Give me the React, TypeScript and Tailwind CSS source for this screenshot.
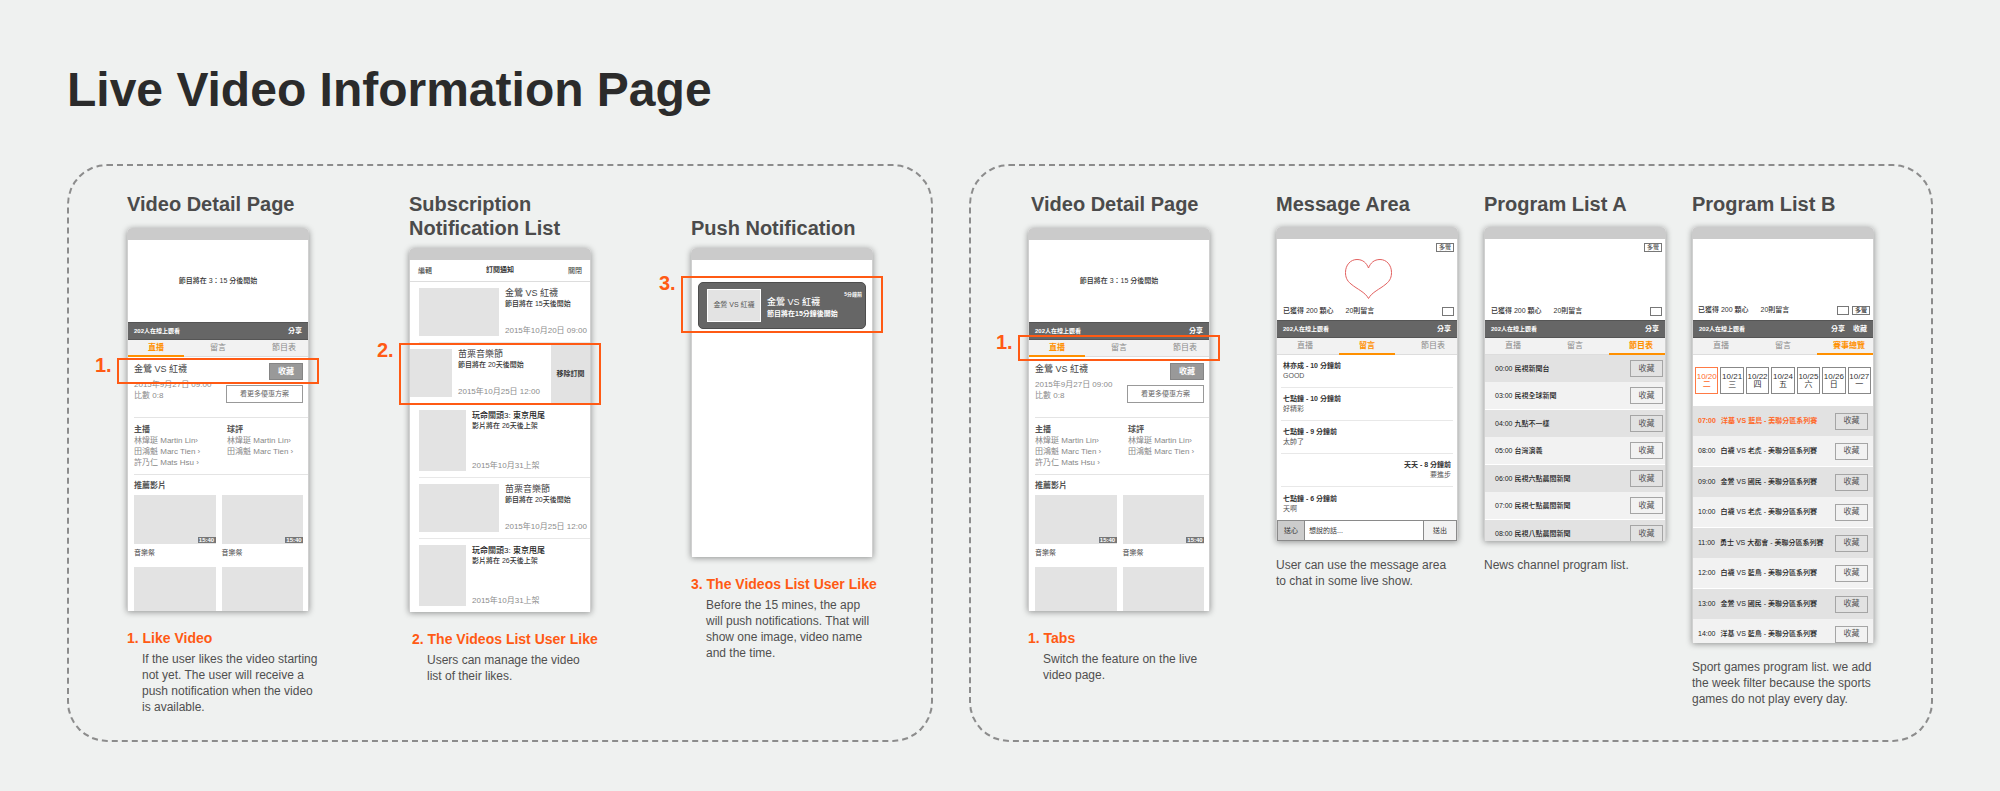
import React from "react";

/* ---------- shared pieces ---------- */

function Phone({ height, children, overlay }: { height: string; children: React.ReactNode; overlay?: React.ReactNode }) {
  return (
    <div className="relative">
      <div className={`${height} flex flex-col overflow-hidden rounded-t-[5px] bg-white shadow-[0_1px_6px_rgba(0,0,0,0.4)]`}>
        <div className="h-3 shrink-0 bg-[#cbcbcb]" />
        <div className="flex min-h-0 flex-1 flex-col overflow-hidden border-x border-[#d0d0d0] text-[#333]">{children}</div>
      </div>
      {overlay}
    </div>
  );
}

function Marker({ label, place }: { label: string; place: string }) {
  return (
    <div className={`absolute -inset-x-[10px] border-2 border-[#ff5a14] ${place}`}>
      <span className="absolute -top-[7px] -left-6 text-xl leading-6 font-bold text-[#ff5a14]">{label}</span>
    </div>
  );
}

function Column({ title, pad = "pt-0", gap = "mb-3", indent = "pl-0", children }: {
  title: string[]; pad?: string; gap?: string; indent?: string; children: React.ReactNode;
}) {
  return (
    <section className={`w-[182px] shrink-0 ${pad}`}>
      <h2 className={`text-xl leading-6 font-bold whitespace-nowrap text-[#4b4b4b] ${gap} ${indent}`}>
        {title.map((t) => <span key={t} className="block">{t}</span>)}
      </h2>
      {children}
    </section>
  );
}

function Lines({ lines, className = "" }: { lines: string[]; className?: string }) {
  return (
    <p className={`text-xs leading-4 whitespace-nowrap text-[#4f4f4f] ${className}`}>
      {lines.map((l) => <span key={l} className="block">{l}</span>)}
    </p>
  );
}

function Caption({ title, lines, indent = "pl-0" }: { title: string; lines: string[]; indent?: string }) {
  return (
    <div className={`mt-[17px] ${indent}`}>
      <h3 className="mb-[3px] text-sm leading-5 font-bold whitespace-nowrap text-[#ff5a14]">{title}</h3>
      <Lines lines={lines} className="pl-[15px]" />
    </div>
  );
}

function WatchBar({ actions }: { actions: string[] }) {
  return (
    <div className="flex h-[18px] shrink-0 items-center border-y border-[#555] bg-[#666] px-[6px] font-bold text-white">
      <span className="text-[6px]">202人在線上觀看</span>
      <span className="ml-auto flex gap-2">
        {actions.map((a) => <button key={a} type="button" className="text-[7px] leading-3">{a}</button>)}
      </span>
    </div>
  );
}

function Tabs({ active, third = "節目表" }: { active: number; third?: string }) {
  return (
    <div className="grid h-[17px] shrink-0 grid-cols-3 gap-x-[6px] bg-[#f2f2f2] shadow-[inset_0_-1px_0_#ddd]">
      {["直播", "留言", third].map((t, i) => (
        <button
          key={t}
          type="button"
          className={`border-b-2 text-[8px] leading-3 whitespace-nowrap ${i === 2 ? "pl-2" : ""} ${
            i === active ? "border-[#ff9000] font-bold text-[#ff9000]" : "border-transparent text-[#8a8a8a]"
          }`}
        >
          {t}
        </button>
      ))}
    </div>
  );
}

/* ---------- video detail ---------- */

function People({ role, names }: { role: string; names: string[] }) {
  return (
    <div className="text-[8px] leading-[11px] text-[#888]">
      <h4 className="font-bold text-[#555]">{role}</h4>
      {names.map((n) => <a key={n} href="#" className="block whitespace-nowrap">{n}</a>)}
    </div>
  );
}

function Thumb() {
  return (
    <figure>
      <div className="flex h-[49px] items-end justify-end bg-[#e3e3e3]">
        <span className="mb-px w-[18px] bg-[#777] text-center text-[6px] leading-[6px] font-bold text-white">15:40</span>
      </div>
      <figcaption className="pt-1 text-[7px] leading-[10px] text-[#444]">音樂祭</figcaption>
    </figure>
  );
}

function VideoDetail() {
  return (
    <>
      <div className="flex h-[82px] shrink-0 items-center justify-center text-[7px] font-medium">節目將在 3：15 分後開始</div>
      <WatchBar actions={["分享"]} />
      <Tabs active={0} />
      <div className="flex h-[60px] shrink-0 justify-between pr-[5px] pl-[6px]">
        <div className="pt-[7px] whitespace-nowrap">
          <h4 className="mb-1 text-[9px] leading-[11px] text-[#444]">金鶯 VS 紅襪</h4>
          <p className="text-[8px] leading-[11px] text-[#8c8c8c]">2015年9月27日 09:00</p>
          <p className="text-[8px] leading-[11px] text-[#8c8c8c]">比數 0:8</p>
        </div>
        <div className="flex flex-col items-end gap-[5px] pt-[6px]">
          <button type="button" className="h-[17px] w-[34px] border border-[#858585] bg-[#999] text-[8px] leading-3 font-bold text-white">收藏</button>
          <button type="button" className="h-[18px] w-[77px] border border-[#999] text-[7px] leading-3 text-[#666]">看更多優惠方案</button>
        </div>
      </div>
      <div className="ml-[6px] grid h-[57px] shrink-0 grid-cols-[93px_1fr] border-t border-[#e4e4e4] pt-[6px]">
        <People role="主播" names={["林煒珽 Martin Lin›", "田鴻魁 Marc Tien ›", "許乃仁 Mats Hsu ›"]} />
        <People role="球評" names={["林煒珽 Martin Lin›", "田鴻魁 Marc Tien ›"]} />
      </div>
      <div className="ml-[6px] border-t border-[#e4e4e4] pt-[5px] pr-[5px]">
        <h4 className="mb-1 text-[8px] leading-[11px] font-bold text-[#555]">推薦影片</h4>
        <div className="grid grid-cols-2 gap-x-[6px] gap-y-[9px]">
          <Thumb />
          <Thumb />
          <div className="h-[49px] bg-[#e3e3e3]" />
          <div className="h-[49px] bg-[#e3e3e3]" />
        </div>
      </div>
    </>
  );
}

/* ---------- subscription list ---------- */

function SubRow({ kind, title, sub, date, removable }: {
  kind: "wide" | "tall"; title: string; sub: string; date: string; removable?: boolean;
}) {
  const tall = kind === "tall";
  return (
    <li className={`flex shrink-0 items-stretch ${tall ? "h-[74px]" : "h-[61px]"}`}>
      <div className={`flex min-w-0 flex-1 border-b border-[#e8e8e8] py-[6px] ${removable ? "" : "ml-[9px]"}`}>
        <div className={`shrink-0 bg-[#e3e3e3] ${tall ? "w-[47px]" : removable ? "w-[42px]" : "w-[80px]"}`} />
        <div className="ml-[6px] flex flex-col whitespace-nowrap">
          <h4 className={tall ? "text-[8px] leading-[11px] font-medium text-[#222]" : "text-[9px] leading-[11px] text-[#444]"}>{title}</h4>
          <p className="text-[7px] leading-[10px] font-medium">{sub}</p>
          <p className="mt-auto text-[8px] leading-[11px] text-[#8c8c8c]">{date}</p>
        </div>
      </div>
      {removable && (
        <button type="button" className="w-[39px] bg-[#e2e2e2] text-[7px] leading-3 font-bold">移除訂閱</button>
      )}
    </li>
  );
}

function Subscriptions() {
  return (
    <>
      <div className="grid h-[22px] shrink-0 grid-cols-3 items-center border-b border-[#ddd] px-2 text-[7px]">
        <button type="button" className="text-left leading-3">編輯</button>
        <span className="text-center font-bold">訂閱通知</span>
        <button type="button" className="text-right leading-3">關閉</button>
      </div>
      <ul className="flex flex-col">
        <SubRow kind="wide" title="金鶯 VS 紅襪" sub="節目將在 15天後開始" date="2015年10月20日 09:00" />
        <SubRow kind="wide" title="苗栗音樂節" sub="節目將在 20天後開始" date="2015年10月25日 12:00" removable />
        <SubRow kind="tall" title="玩命關頭3: 東京甩尾" sub="影片將在 26天後上架" date="2015年10月31上架" />
        <SubRow kind="wide" title="苗栗音樂節" sub="節目將在 20天後開始" date="2015年10月25日 12:00" />
        <SubRow kind="tall" title="玩命關頭3: 東京甩尾" sub="影片將在 26天後上架" date="2015年10月31上架" />
      </ul>
    </>
  );
}

/* ---------- push notification ---------- */

function Push() {
  return (
    <div className="mx-[6px] mt-[22px] flex h-[47px] items-center rounded-[5px] border border-[#4d4d4d] bg-[#666] pr-[3px] pl-2 text-white">
      <div className="flex h-[33px] w-[54px] shrink-0 items-center justify-center border border-white bg-[#e3e3e3] text-[7px] whitespace-nowrap text-[#555]">金鶯 VS 紅襪</div>
      <div className="ml-[6px] flex-1 pb-[2px] whitespace-nowrap">
        <p className="text-right text-[5px] leading-[6px] font-bold">5分鐘前</p>
        <p className="text-[9px] leading-[11px] font-medium">金鶯 VS 紅襪</p>
        <p className="text-[7px] leading-[11px] font-bold">節目將在15分鐘後開始</p>
      </div>
    </div>
  );
}

/* ---------- live channel screens ---------- */

function Stats({ children }: { children?: React.ReactNode }) {
  return (
    <div className="flex h-3 items-center gap-3 text-[7px] leading-3 font-medium whitespace-nowrap">
      <span>已獲得 200 顆心</span>
      <span>20則留言</span>
      <span className="ml-auto flex gap-[3px]">{children}</span>
    </div>
  );
}

const ScreenBox = () => <button type="button" aria-label="全螢幕" className="h-[9px] w-3 border border-[#777]" />;
const MultiBox = () => (
  <button type="button" className="h-[9px] w-[18px] border border-[#777] text-[6px] leading-[7px] whitespace-nowrap">多螢</button>
);

function Stage({ children }: { children?: React.ReactNode }) {
  return (
    <div className="flex h-[81px] shrink-0 flex-col justify-between pt-1 pr-[3px] pb-[3px] pl-[6px]">
      <div className="flex justify-end"><MultiBox /></div>
      {children}
      <Stats><ScreenBox /></Stats>
    </div>
  );
}

function Messages() {
  const rows = [
    { head: "林亦成 - 10 分鐘前", body: "GOOD" },
    { head: "七點鐘 - 10 分鐘前", body: "好精彩" },
    { head: "七點鐘 - 9 分鐘前", body: "太帥了" },
    { head: "天天 - 8 分鐘前", body: "要進步", mine: true },
    { head: "七點鐘 - 6 分鐘前", body: "天啊" },
  ];
  return (
    <>
      <Stage>
        <svg viewBox="0 0 47 40" className="h-10 w-[47px] shrink-0 self-center" fill="none" stroke="#e2605f" strokeWidth="1">
          <path d="M23.500 39.500C20 33 12.500 30.500 6 25C1.500 21.500 0.500 17.500 0.500 13.500C0.500 6 5.500 0.500 12 0.500C18 0.500 21.500 4 23.500 9C25.500 4 29 0.500 35 0.500C41.500 0.500 46.500 6 46.500 13.500C46.500 17.500 45.500 21.500 41 25C34.500 30.500 27 33 23.500 39.500Z" />
        </svg>
      </Stage>
      <WatchBar actions={["分享"]} />
      <Tabs active={1} />
      <ul className="flex flex-1 flex-col px-1 text-[7px] leading-[10px]">
        {rows.map((r) => (
          <li key={r.head} className={`flex h-[33px] shrink-0 flex-col justify-center border-b border-[#e8e8e8] px-[2px] last:border-0 ${r.mine ? "text-right" : ""}`}>
            <p className="font-bold">{r.head}</p>
            <p className="text-[#555]">{r.body}</p>
          </li>
        ))}
      </ul>
      <form className="flex h-[21px] shrink-0 border border-[#8a8a8a] text-[7px]" onSubmit={(e) => e.preventDefault()}>
        <button type="button" className="w-[27px] border-r border-[#8a8a8a] bg-[#ccc] leading-3">送心</button>
        <input aria-label="留言" placeholder="想說的話..." className="min-w-0 flex-1 px-1 leading-3 placeholder:text-[#333]" />
        <button type="submit" className="w-[33px] border-l border-[#8a8a8a] bg-[#f2f2f2] leading-3">送出</button>
      </form>
    </>
  );
}

function SaveButton() {
  return <button type="button" className="ml-auto h-[17px] w-[33px] shrink-0 border border-[#a5a5a5] text-[8px] leading-3 font-normal text-[#555]">收藏</button>;
}

function NewsList() {
  const items = [
    ["00:00", "民視新聞台"],
    ["03:00", "民視全球新聞"],
    ["04:00", "九點不一樣"],
    ["05:00", "台灣演義"],
    ["06:00", "民視六點晨間新聞"],
    ["07:00", "民視七點晨間新聞"],
    ["08:00", "民視八點晨間新聞"],
  ];
  return (
    <>
      <Stage />
      <WatchBar actions={["分享"]} />
      <Tabs active={2} />
      <ul>
        {items.map(([time, name]) => (
          <li key={time} className="flex h-[27px] items-center pr-[2px] pl-[10px] text-[7px] leading-3 font-medium whitespace-nowrap text-[#222] odd:bg-[#e2e2e2] even:h-[28px] even:border-b even:border-white even:bg-[#f2f2f2]">
            {time} {name}
            <SaveButton />
          </li>
        ))}
      </ul>
    </>
  );
}

function SportsList() {
  const days = [["10/20", "二"], ["10/21", "三"], ["10/22", "四"], ["10/24", "五"], ["10/25", "六"], ["10/26", "日"], ["10/27", "一"]];
  const games = [
    ["07:00", "洋基 VS 藍鳥"],
    ["08:00", "白襪 VS 老虎"],
    ["09:00", "金鶯 VS 國民"],
    ["10:00", "白襪 VS 老虎"],
    ["11:00", "勇士 VS 大都會"],
    ["12:00", "白襪 VS 藍鳥"],
    ["13:00", "金鶯 VS 國民"],
    ["14:00", "洋基 VS 藍鳥"],
  ];
  return (
    <>
      <div className="flex h-[81px] shrink-0 flex-col justify-end pr-[3px] pb-1 pl-[5px]">
        <Stats><ScreenBox /><MultiBox /></Stats>
      </div>
      <WatchBar actions={["分享", "收藏"]} />
      <Tabs active={2} third="賽事總覽" />
      <div className="grid h-[51px] shrink-0 grid-cols-7 items-center gap-x-[2px] px-[2px]">
        {days.map(([d, w], i) => (
          <button key={d} type="button" className={`flex h-[27px] flex-col items-center justify-center border text-[8px] leading-[8px] ${i === 0 ? "border-[#ff7a45] text-[#ff6a2a]" : "border-[#888]"}`}>
            <span>{d}</span>
            <span>{w}</span>
          </button>
        ))}
      </div>
      <ul>
        {games.map(([time, name]) => (
          <li key={time} className="flex h-[30px] items-center gap-[5px] px-[5px] text-[7px] leading-3 font-medium whitespace-nowrap text-[#222] first:font-bold first:text-[#ff6a2a] odd:bg-[#e2e2e2] even:h-[31px] even:border-b even:border-white even:bg-[#f2f2f2]">
            <span>{time}</span>
            <span>{name} - 美聯分區系列賽</span>
            <SaveButton />
          </li>
        ))}
      </ul>
    </>
  );
}

/* ---------- page ---------- */

export default function App() {
  return (
    <main className="min-h-screen bg-[#eff1f0] px-[67px] pt-[60px] pb-12 font-['Liberation_Sans','Noto_Sans_CJK_TC',sans-serif]">
      <h1 className="mb-11 text-5xl leading-[60px] font-bold text-[#2b2b2b]">Live Video Information Page</h1>
      <div className="grid grid-cols-[866fr_964fr] gap-9">
        <div className="flex justify-between rounded-[40px] border-2 border-dashed border-[#8c8c8c] px-[58px] pt-[26px] pb-[25px]">
          <Column title={["Video Detail Page"]}>
            <Phone height="h-[383px]" overlay={<Marker label="1." place="top-[130px] h-[26px]" />}><VideoDetail /></Phone>
            <Caption title="1. Like Video" lines={["If the user likes the video starting", "not yet. The user will receive a", "push notification when the video", "is available."]} />
          </Column>
          <Column title={["Subscription", "Notification List"]} gap="mb-2">
            <Phone height="h-[364px]" overlay={<Marker label="2." place="top-[95px] h-[62px]" />}><Subscriptions /></Phone>
            <Caption title="2. The Videos List User Like" indent="pl-[3px]" lines={["Users can manage the video", "list of their likes."]} />
          </Column>
          <Column title={["Push Notification"]} pad="pt-6" gap="mb-2">
            <Phone height="h-[309px]" overlay={<Marker label="3." place="top-7 h-[57px]" />}><Push /></Phone>
            <Caption title="3. The Videos List User Like" lines={["Before the 15 mines, the app", "will push notifications. That will", "show one image, video name", "and the time."]} />
          </Column>
        </div>
        <div className="flex justify-between rounded-[40px] border-2 border-dashed border-[#8c8c8c] px-[57px] pt-[26px] pb-[25px]">
          <Column title={["Video Detail Page"]} indent="pl-[3px]">
            <Phone height="h-[383px]" overlay={<Marker label="1." place="top-[107px] h-[26px]" />}><VideoDetail /></Phone>
            <Caption title="1. Tabs" lines={["Switch the feature on the live", "video page."]} />
          </Column>
          <div className="flex gap-[26px]">
            <Column title={["Message Area"]} gap="mb-[11px]">
              <Phone height="h-[314px]"><Messages /></Phone>
              <Lines lines={["User can use the message area", "to chat in some live show."]} className="mt-4" />
            </Column>
            <Column title={["Program List A"]} gap="mb-[11px]">
              <Phone height="h-[314px]"><NewsList /></Phone>
              <Lines lines={["News channel program list."]} className="mt-4" />
            </Column>
            <Column title={["Program List B"]} gap="mb-[11px]">
              <Phone height="h-[416px]"><SportsList /></Phone>
              <Lines lines={["Sport games program list. we add", "the week filter because the sports", "games do not play every day."]} className="mt-4" />
            </Column>
          </div>
        </div>
      </div>
    </main>
  );
}
